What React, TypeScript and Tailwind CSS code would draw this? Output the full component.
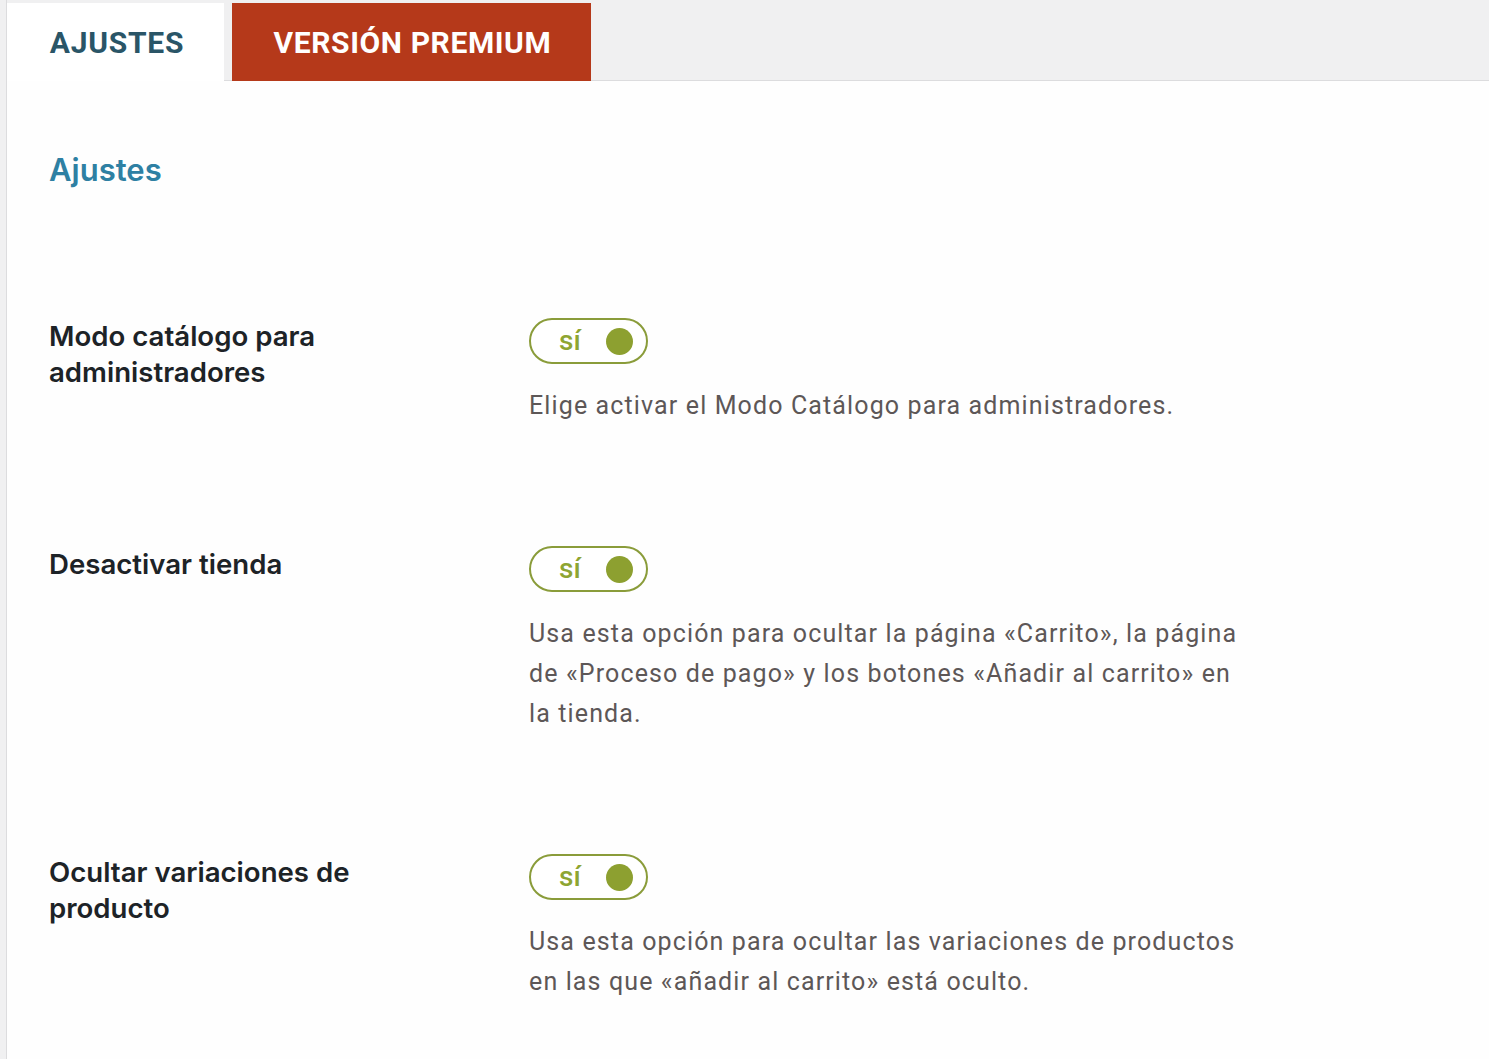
import React from "react";

function Toggle() {
  return (
    <div className="flex h-[46px] w-[119px] items-center rounded-full border-2 border-[#8a9c3a] bg-white pl-[28px] pr-[13px]">
      <span className="text-[28px] font-medium leading-none text-[#8ea532] [font-family:Roboto,sans-serif]">sí</span>
      <span className="ml-auto h-[27px] w-[27px] rounded-full bg-[#8da030]" />
    </div>
  );
}

function Row({ label, desc }: { label: React.ReactNode; desc: React.ReactNode }) {
  return (
    <div className="flex">
      <div className="w-[480px] text-[27.6px] font-semibold leading-[36px] text-[#1d2327] [font-family:Inter,sans-serif]">
        {label}
      </div>
      <div className="flex flex-col">
        <Toggle />
        <p className="mt-[22px] w-[722px] text-[25px] leading-[40px] tracking-[0.045em] text-[#5d5757] [font-family:Roboto,sans-serif]">
          {desc}
        </p>
      </div>
    </div>
  );
}

export default function App() {
  return (
    <div className="flex min-h-[1059px] w-full bg-[#f0f0f1]">
      <div className="w-[7px] shrink-0 border-r border-[#dcdcde]" />
      <div className="flex min-w-0 flex-1 flex-col">
        <div className="flex h-[81px] items-end border-b border-[#dcdcde] bg-[#f0f0f1]">
          <div className="relative -mb-px flex h-[78px] w-[217px] items-center justify-center bg-white pl-[3px] pt-[1px] text-[30px] font-bold tracking-[0.025em] text-[#2a5567] [font-family:Roboto,sans-serif]">
            AJUSTES
          </div>
          <div className="-mb-px ml-[8px] flex h-[78px] w-[359px] items-center justify-center bg-[#b5391a] pl-[2px] pt-[1px] text-[30px] font-bold tracking-[0.02em] text-white [font-family:Roboto,sans-serif]">
            VERSIÓN PREMIUM
          </div>
        </div>
        <div className="flex-1 bg-[#fefefe] pl-[42px]">
          <h2 className="pt-[69px] text-[31px] font-semibold leading-[40px] text-[#2e80a3] [font-family:Inter,sans-serif]">
            Ajustes
          </h2>
          <div className="mt-[128px] flex flex-col gap-[120px]">
            <Row
              label={<>Modo catálogo para<br />administradores</>}
              desc="Elige activar el Modo Catálogo para administradores."
            />
            <Row
              label="Desactivar tienda"
              desc="Usa esta opción para ocultar la página «Carrito», la página de «Proceso de pago» y los botones «Añadir al carrito» en la tienda."
            />
            <Row
              label={<>Ocultar variaciones de<br />producto</>}
              desc="Usa esta opción para ocultar las variaciones de productos en las que «añadir al carrito» está oculto."
            />
          </div>
        </div>
      </div>
    </div>
  );
}
